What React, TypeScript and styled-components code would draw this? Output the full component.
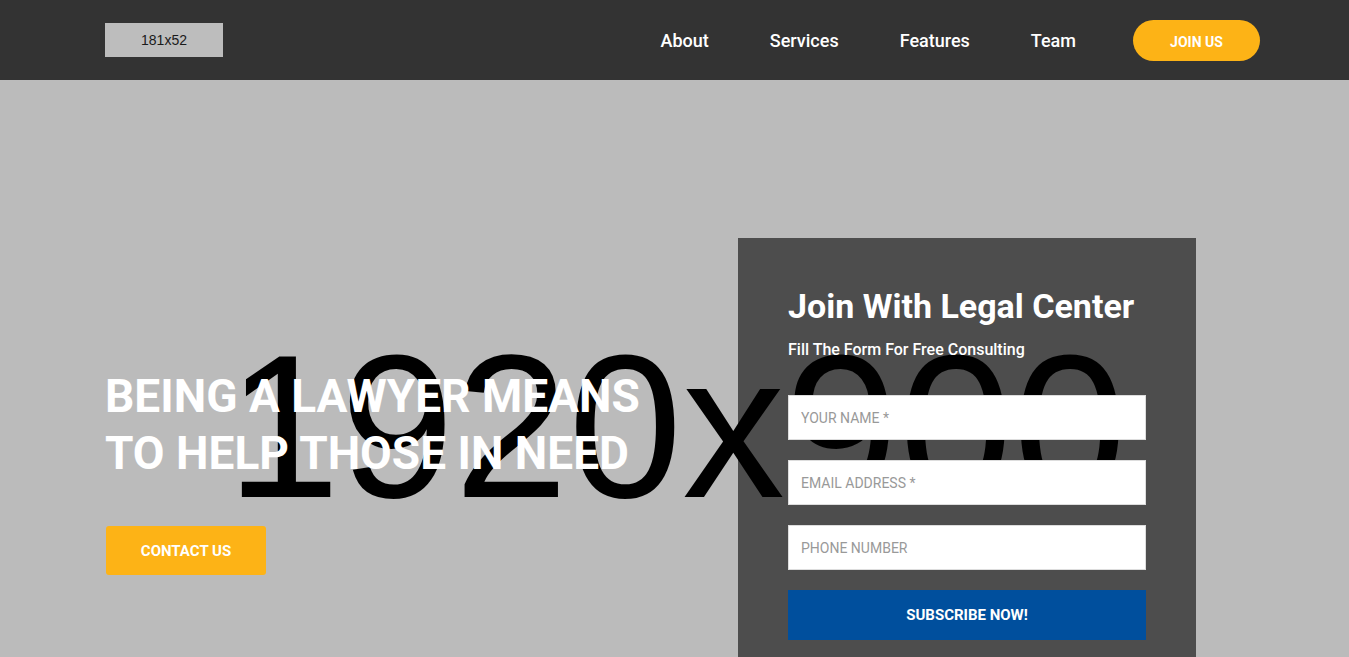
import React from "react";
import styled, { createGlobalStyle } from "styled-components";

const Global = createGlobalStyle`
  * { box-sizing: border-box; }
  html, body { margin: 0; padding: 0; }
  body { font-family: Roboto, "Liberation Sans", Arial, sans-serif; overflow: hidden; background: #bbbbbb; }
`;

const Header = styled.header`
  height: 80px;
  background: #333333;
`;

const HeaderInner = styled.div`
  height: 100%;
  padding: 0 89px 0 105px;
  display: flex;
  align-items: center;
  justify-content: space-between;
`;

const Logo = styled.div`
  width: 118px;
  height: 34px;
  background: #bdbdbd;
  color: #1a1a1a;
  font-family: "Liberation Sans", Arial, sans-serif;
  font-size: 14px;
  display: flex;
  align-items: center;
  justify-content: center;
`;

const Nav = styled.nav`
  display: flex;
  align-items: center;
  gap: 61px;
`;

const NavLink = styled.a`
  color: #fff;
  font-size: 18px;
  font-weight: 500;
  text-decoration: none;
`;

const PillButton = styled.a`
  margin-left: -4px;
  width: 127px;
  height: 41px;
  padding-top: 3px;
  border-radius: 21px;
  background: #fdb316;
  color: #fff;
  font-size: 14px;
  font-weight: 700;
  display: flex;
  align-items: center;
  justify-content: center;
  text-decoration: none;
`;

const Hero = styled.section`
  position: relative;
  height: 700px;
  background: #bbbbbb;
  overflow: hidden;
`;

const Placeholder = styled.div`
  position: absolute;
  left: 4px;
  right: 0;
  top: 243px;
  text-align: center;
  font-family: "Liberation Sans", Arial, sans-serif;
  font-size: 205px;
  line-height: 1;
  color: #000;
  pointer-events: none;
`;

const HeroInner = styled.div`
  position: relative;
  display: flex;
  padding: 0 0 0 105px;
`;

const Left = styled.div`
  width: 633px;
  padding-top: 288px;
`;

const Title = styled.h1`
  margin: 0;
  color: #fff;
  font-size: 46px;
  font-weight: 700;
  line-height: 57px;
  text-transform: uppercase;
`;

const ContactButton = styled.a`
  margin-top: 44px;
  margin-left: 1px;
  width: 160px;
  height: 49px;
  border-radius: 3px;
  background: #fdb316;
  color: #fff;
  font-size: 15px;
  font-weight: 700;
  display: flex;
  align-items: center;
  justify-content: center;
  text-decoration: none;
`;

const Panel = styled.div`
  margin-top: 158px;
  width: 458px;
  height: 480px;
  background: rgba(0, 0, 0, 0.59);
  padding: 48px 50px;
`;

const PanelTitle = styled.h2`
  margin: 0;
  color: #fff;
  font-size: 34px;
  font-weight: 700;
  line-height: 40px;
`;

const PanelSub = styled.p`
  margin: 14px 0 35px;
  color: #fff;
  font-size: 16px;
  font-weight: 500;
  line-height: 20px;
`;

const Form = styled.form`
  display: flex;
  flex-direction: column;
  gap: 20px;
`;

const Input = styled.input`
  height: 45px;
  width: 100%;
  border: 1px solid #dddddd;
  background: #fff;
  padding: 0 12px;
  font-family: Roboto, sans-serif;
  font-size: 14px;
  color: #333;
  outline: none;
  &::placeholder { color: #999; text-transform: uppercase; }
`;

const Submit = styled.button`
  height: 50px;
  border: none;
  background: #004f9d;
  color: #fff;
  font-family: Roboto, sans-serif;
  font-size: 15px;
  font-weight: 700;
  text-transform: uppercase;
`;

export default function App() {
  return (
    <>
      <Global />
      <Header>
        <HeaderInner>
          <Logo>181x52</Logo>
          <Nav>
            <NavLink href="#">About</NavLink>
            <NavLink href="#">Services</NavLink>
            <NavLink href="#">Features</NavLink>
            <NavLink href="#">Team</NavLink>
            <PillButton href="#">JOIN US</PillButton>
          </Nav>
        </HeaderInner>
      </Header>
      <Hero>
        <Placeholder>1920x900</Placeholder>
        <HeroInner>
          <Left>
            <Title>
              Being a lawyer means
              <br />
              to help those in need
            </Title>
            <ContactButton href="#">CONTACT US</ContactButton>
          </Left>
          <Panel>
            <PanelTitle>Join With Legal Center</PanelTitle>
            <PanelSub>Fill The Form For Free Consulting</PanelSub>
            <Form onSubmit={(e) => e.preventDefault()}>
              <Input placeholder="YOUR NAME *" />
              <Input placeholder="EMAIL ADDRESS *" />
              <Input placeholder="PHONE NUMBER" />
              <Submit type="submit">Subscribe Now!</Submit>
            </Form>
          </Panel>
        </HeroInner>
      </Hero>
    </>
  );
}
